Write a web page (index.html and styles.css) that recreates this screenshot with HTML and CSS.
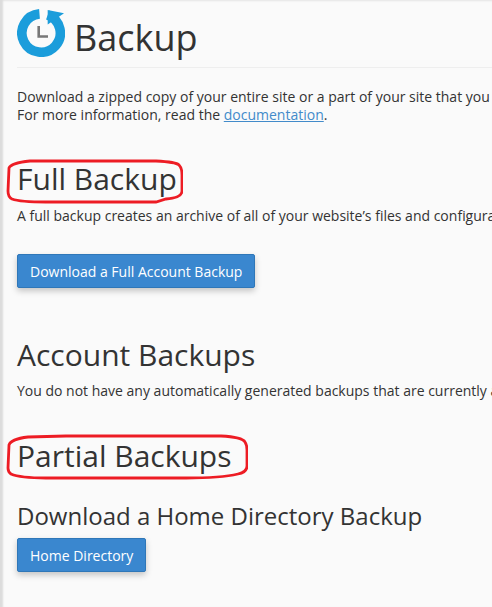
FILE: index.html
```html
<!DOCTYPE html>
<html lang="en">
<head>
<meta charset="utf-8">
<title>Backup</title>
<link rel="stylesheet" href="styles.css">
</head>
<body>
<main class="page">
  <header class="title-bar">
    <svg class="logo" viewBox="0 0 48 48" width="48" height="48" aria-hidden="true">
      <path d="M22.5 4.9 A19.2 19.2 0 1 0 30.7 6" fill="none" stroke="#1b9ddb" stroke-width="9.6"/>
      <path d="M30.7 1 L47 4.3 L30.7 15.5 Z" fill="#1b9ddb"/>
      <path d="M21.7 17 V27.5 H31" fill="none" stroke="#777" stroke-width="2.6"/>
    </svg>
    <h1 class="page-title">Backup</h1>
  </header>
  <p class="intro">Download a zipped copy of your entire site or a part of your site that you can save to your computer.<br>For more information, read the <a href="#">documentation</a>.</p>

  <section class="section-full">
    <h2 class="heading">Full Backup</h2>
    <svg class="ring ring-full" viewBox="0 0 177 45" width="177" height="45" aria-hidden="true"><path d="M3 9 Q5 4 24 2 L150 2 Q170 3 173 6 Q176 9 176 16 V32 Q176 39 160 40 L150 43 H40 Q14 43 6 40 Q2 38 2 32 Z" fill="none" stroke="#ed1c24" stroke-width="2.8"/></svg>
    <p class="text">A full backup creates an archive of all of your website’s files and configuration settings.</p>
    <a class="btn" href="#">Download a Full Account Backup</a>
  </section>

  <section class="section-account">
    <h2 class="heading">Account Backups</h2>
    <p class="text">You do not have any automatically generated backups that are currently available.</p>
  </section>

  <section class="section-partial">
    <h2 class="heading">Partial Backups</h2>
    <svg class="ring ring-partial" viewBox="0 0 242 46" width="242" height="46" aria-hidden="true"><path d="M3 11 Q5 5 22 3 L60 2 H215 Q236 3 239 8 Q241 11 241 16 V32 Q241 38 232 40 Q215 44 180 44 H40 Q14 44 5 40 Q2 38 2 34 Z" fill="none" stroke="#ed1c24" stroke-width="2.8"/></svg>
    <h3 class="subheading">Download a Home Directory Backup</h3>
    <a class="btn" href="#">Home Directory</a>
  </section>
</main>
</body>
</html>
```
FILE: styles.css
```css
html, body {
  margin: 0;
  height: 100%;
  overflow: hidden;
}
body {
  background: #fafafa;
  color: #333;
  font-family: "Open Sans", sans-serif;
  font-size: 14px;
  line-height: 18px;
}
.page {
  height: 607px;
  box-sizing: border-box;
  padding: 0 0 0 17px;
  overflow: hidden;
  box-shadow: inset 4px 0 2px -1px #dcdcdc, inset 0 2px 2px -1px #e4e4e4;
}
.title-bar {
  display: flex;
  align-items: center;
  gap: 9px;
  height: 67px;
  border-bottom: 1px solid #eeeeee;
}
.logo {
  flex: none;
  margin-top: -2px;
}
.page-title {
  margin: 0;
  font-size: 36px;
  font-weight: 400;
  line-height: 44px;
  position: relative;
  top: 4px;
}
.intro, .text {
  margin: 0;
  white-space: nowrap;
}
.intro {
  margin-top: 20px;
}
a {
  color: #428bca;
}
.section-full {
  position: relative;
  margin-top: 37px;
}
.heading {
  margin: 0;
  font-size: 30px;
  font-weight: 400;
  line-height: 36px;
}
.subheading {
  margin: 27px 0 0;
  font-size: 24px;
  font-weight: 400;
  line-height: 29px;
}
.ring {
  position: absolute;
  left: -11px;
}
.ring-full {
  top: -2px;
}
.ring-partial {
  top: -4px;
}
.btn {
  display: inline-block;
  box-sizing: border-box;
  padding: 8px 12px;
  height: 34px;
  background: #3a87cf;
  border: 1px solid #2f77b8;
  border-radius: 2px;
  color: #fff;
  text-decoration: none;
  font-size: 14px;
  line-height: 17px;
  box-shadow: 0 3px 6px rgba(0,0,0,.22);
}
.section-full .text {
  margin-top: 10px;
}
.section-full .btn {
  margin-top: 29px;
}
.section-account {
  margin-top: 49px;
}
.section-account .text {
  margin-top: 9px;
}
.section-partial {
  position: relative;
  margin-top: 38px;
}
.section-partial .btn {
  margin-top: 8px;
}
```
